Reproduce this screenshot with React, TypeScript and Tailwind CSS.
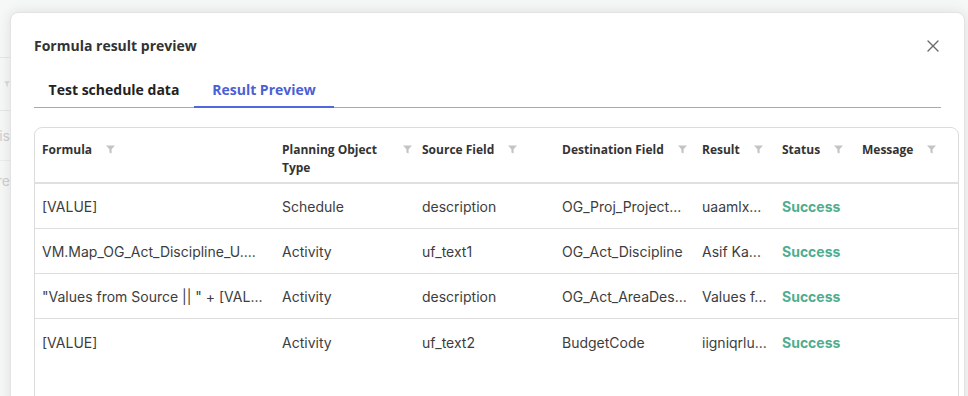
import React from "react";

const heading = "font-['Open_Sans','Liberation_Sans',sans-serif]";
const body = "font-['Inter','Liberation_Sans',sans-serif]";

const columns = [
  "Formula",
  "Planning Object Type",
  "Source Field",
  "Destination Field",
  "Result",
  "Status",
  "Message",
];

const rows = [
  ["[VALUE]", "Schedule", "description", "OG_Proj_Project...", "uaamlx...", "Success"],
  ["VM.Map_OG_Act_Discipline_U....", "Activity", "uf_text1", "OG_Act_Discipline", "Asif Ka...", "Success"],
  ['"Values from Source || " + [VAL...', "Activity", "description", "OG_Act_AreaDes...", "Values f...", "Success"],
  ["[VALUE]", "Activity", "uf_text2", "BudgetCode", "iigniqrlu...", "Success"],
];

// same column widths for header and body rows
const grid = "grid grid-cols-[240px_140px_140px_140px_80px_80px_1fr]";

function FilterIcon() {
  return (
    <svg width="9" height="9" viewBox="0 0 9 9" className="shrink-0 mt-[4px]">
      <path d="M0 0.5H9L5.6 4.2V8.5L3.4 7.4V4.2Z" fill="#c4c4c4" />
    </svg>
  );
}

function CloseIcon() {
  return (
    <svg width="12" height="12" viewBox="0 0 12 12">
      <path d="M1 1L11 11M11 1L1 11" stroke="#6b6b6b" strokeWidth="1.4" strokeLinecap="round" />
    </svg>
  );
}

function ResultTable() {
  return (
    <div className="w-[925px] h-[300px] rounded-lg border border-[#dcdcdc] bg-white">
      {/* header */}
      <div className={`${grid} h-[56px] border-b-2 border-[#e0e0e0]`}>
        {columns.map((c) => (
          <div key={c} className="flex items-start gap-3.5 pl-[7px] pr-[3px] pt-[13px]">
            <span className={`${heading} text-[12px] leading-[18px] font-bold text-[#333]`}>{c}</span>
            <FilterIcon />
          </div>
        ))}
      </div>

      {/* body */}
      {rows.map((r, i) => (
        <div
          key={i}
          className={`${grid} h-[45px] items-center ${i < rows.length - 1 ? "border-b border-[#dedede]" : ""}`}
        >
          {r.map((v, j) => (
            <div
              key={j}
              className={`${body} pl-[7px] pr-1 pt-px text-[14px] whitespace-nowrap overflow-hidden ${
                j === 5 ? "font-bold text-[#4fad8f]" : "text-[#3d3d3d]"
              }`}
            >
              {v}
            </div>
          ))}
          <div />
        </div>
      ))}
    </div>
  );
}

export default function App() {
  return (
    <div className="relative h-[396px] w-[968px] overflow-hidden bg-[#f6f7f7]">
      {/* page behind the modal, only a sliver shows on the left */}
      <div className={`${body} w-[10px] pt-[57px] text-[14px] text-[#cfcfcf] overflow-hidden`}>
        <div className="h-[53px] border-t border-[#e6e6e6] flex items-center justify-end">
          <svg width="6" height="6" viewBox="0 0 9 9">
            <path d="M0 0.5H9L5.6 4.2V8.5L3.4 7.4V4.2Z" fill="#d8d8d8" />
          </svg>
        </div>
        <div className="h-[50px] border-t border-[#e6e6e6] flex items-center justify-end">is</div>
        <div className="h-[40px] border-t border-[#ececec] flex items-center justify-end">re</div>
      </div>

      {/* modal */}
      <div className="absolute left-[10px] top-[12px] w-[955px] h-[430px] rounded-lg border border-[#e3e3e3] bg-white shadow-[0_0_14px_rgba(0,0,0,0.10)]">
        <div className="pl-[23px] pr-[23px] pt-[23px]">
          <div className="flex items-center justify-between h-5">
            <h2 className={`${heading} text-[14px] leading-5 font-bold text-[#333]`}>Formula result preview</h2>
            <button className="p-0.5">
              <CloseIcon />
            </button>
          </div>

          <div className={`${heading} mt-[13px] flex border-b border-[#a9a9a9] text-[14px] leading-5 font-bold`}>
            <div className="w-[160px] pt-[11px] pb-[7px] text-center text-[#222]">Test schedule data</div>
            <div className="w-[140px] pt-[11px] pb-[5px] -mb-px text-center text-[#4a5fd6] border-b-2 border-[#5068dc]">
              Result Preview
            </div>
          </div>

          <div className="mt-[19px]">
            <ResultTable />
          </div>
        </div>
      </div>
    </div>
  );
}
